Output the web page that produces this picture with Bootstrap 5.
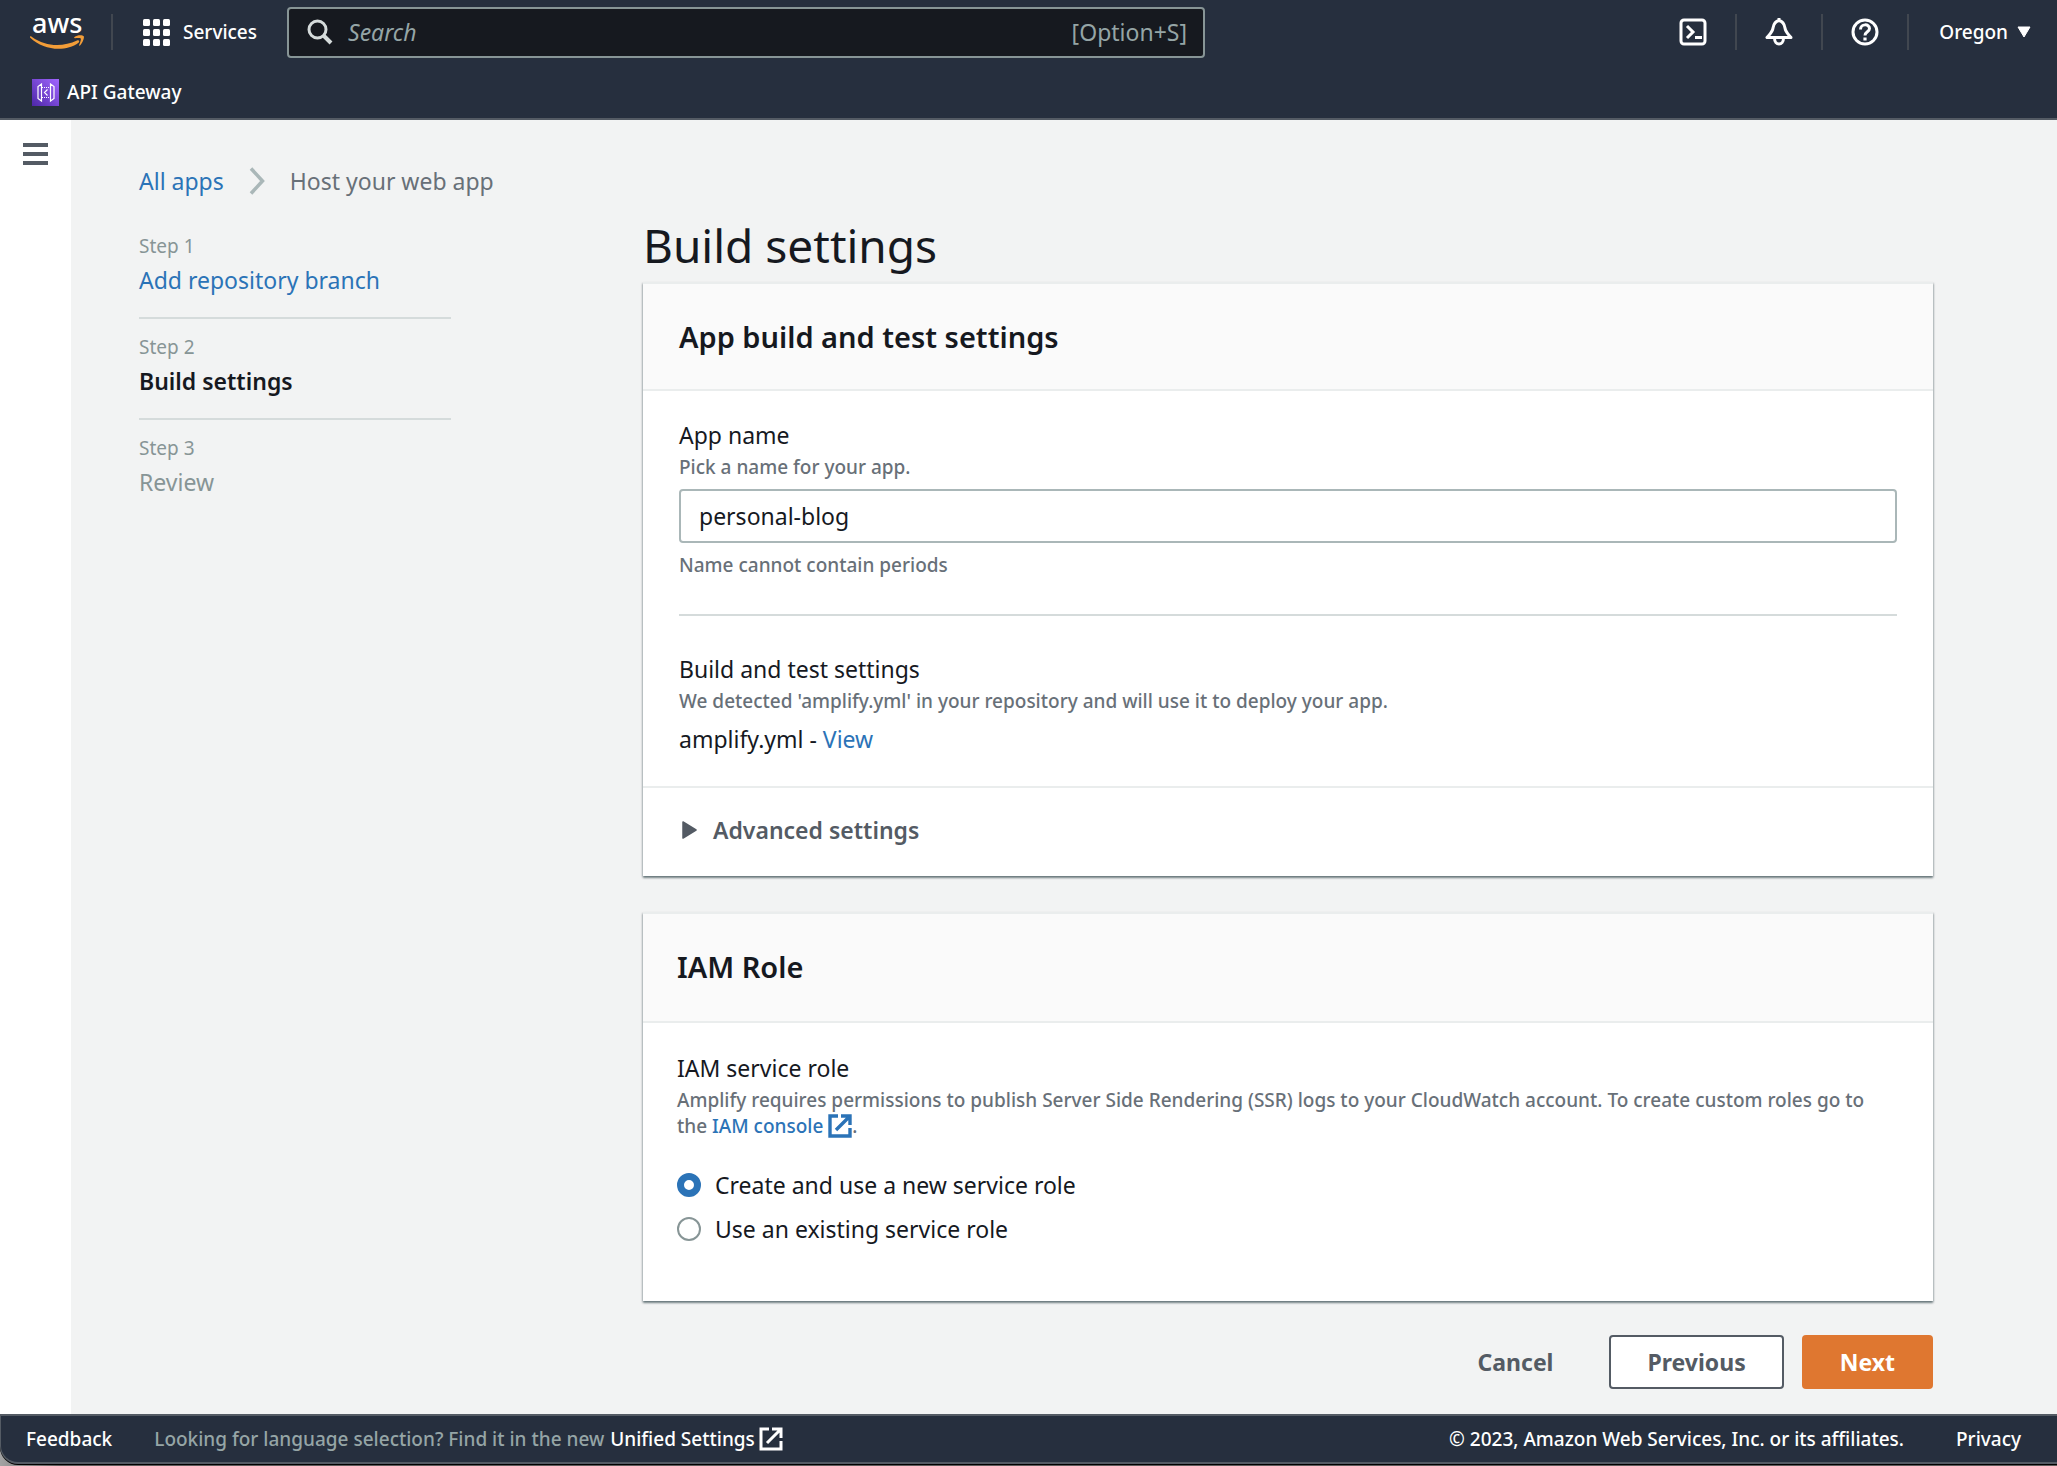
<!DOCTYPE html>
<html lang="en">
<head>
<meta charset="utf-8">
<meta name="viewport" content="width=device-width, initial-scale=1">
<title>Build settings - Host your web app</title>
<link href="https://cdn.jsdelivr.net/npm/bootstrap@5.3.0/dist/css/bootstrap.min.css" rel="stylesheet">
<style>
  :root { --ink: #16191f; --navy: #262f3e; --slate: #545b64; --muted: #687078; --pale: #879596; --blue: #2b73b7; --rule: #d5dbdb; --soft: #eaeded; }
  body { font-family: "Noto Sans", "Open Sans", sans-serif; font-size: 23px; line-height: 30px; color: var(--ink); background: #f2f3f3; }
  a { color: var(--blue); text-decoration: none; }
  a:hover { text-decoration: underline; }
  svg { display: block; flex: none; }
  .hint { color: var(--muted); }
  .note { color: var(--muted); font-size: 19px; line-height: 26px; font-weight: 500; margin-top: 4px; }

  .console-top { background: var(--navy); border-bottom: 2px solid var(--slate); color: #fff; font-size: 19px; line-height: 26px; font-weight: 500; }
  .console-top a, .console-top button { color: #fff; }
  .top-row { height: 64px; padding-left: 30px; padding-right: 26px; }
  .fav-row { height: 54px; padding-left: 32px; padding-top: 2px; }
  .plain-btn { display: flex; align-items: center; background: none; border: 0; padding: 0; font-weight: inherit; }
  .sep { width: 2px; height: 36px; background: #414750; flex: none; }
  .services { margin: 0 30px; gap: 13px; }
  .search-box { flex: 0 1 918px; height: 51px; background: #16191f; border: 2px solid var(--pale); border-radius: 4px; padding: 0 16px 0 18px; gap: 15px; }
  .search-box input { background: none; border: 0; outline: 0; color: #fff; font-size: 23px; font-weight: 400; padding: 0; min-width: 0; }
  .search-box input::placeholder { color: #95a5a6; font-style: italic; opacity: 1; }
  .search-box kbd { background: none; color: #95a5a6; font: 400 23px/30px "Noto Sans", sans-serif; padding: 0; }
  .top-tools { gap: 28px; }
  .region { gap: 9px; padding-left: 2px; }

  .rail { flex: 0 0 71px; background: #fff; padding: 23px 0 0 23px; }
  .page-body { padding: 46px 124px 25px 68px; min-width: 0; }
  .crumbs { gap: 25px; }
  .steps { flex: 0 0 312px; margin-right: 192px; padding-top: 37px; }
  .steps li + li { border-top: 2px solid var(--rule); margin-top: 22px; padding-top: 15px; }
  .steps .label { display: block; color: var(--pale); font-size: 19px; line-height: 26px; margin-bottom: 6px; }
  .steps .later { color: var(--pale); }
  .steps strong, .expander, h2 { font-weight: 600; }

  .wizard { min-width: 0; padding-top: 18px; }
  h1 { font-size: 46px; line-height: 62px; font-weight: 400; margin-bottom: 6px; }
  h2 { font-size: 29px; line-height: 38px; margin-bottom: 0; }
  .panel { background: #fff; border-top: 2px solid var(--soft); box-shadow: 0 2px 2px 0 rgba(0,28,36,.45), 1px 1px 2px 0 rgba(0,28,36,.15), -1px 1px 2px 0 rgba(0,28,36,.15); }
  .panel-head { background: #fafafa; border-bottom: 2px solid var(--soft); padding: 34px 36px 33px; }
  .panel-part { padding: 29px 36px 32px; }
  .panel-more { border-top: 2px solid var(--soft); padding: 27px 36px 31px; }
  .panel-iam { margin-top: 36px; }
  .panel-iam .panel-head { padding: 34px 34px 35px; }
  .panel-iam .panel-part { padding: 30px 34px 57px; }
  .field { height: 54px; border: 2px solid #aab7b8; border-radius: 4px; margin: 9px 0; padding: 0 18px; font-size: 23px; color: var(--ink); }
  .split { border: 0; border-top: 2px solid var(--rule); opacity: 1; margin: 36px 0 38px; }
  .spec { margin-top: 10px; }
  .expander { color: var(--slate); gap: 16px; padding-left: 3px; }
  .ext { display: inline-block; vertical-align: -5px; }
  .choices { margin-top: 31px; gap: 14px; }
  .choice { display: flex; align-items: center; gap: 14px; }
  .choice .form-check-input { width: 24px; height: 24px; margin: 0; border: 2px solid var(--pale); }
  .choice .form-check-input:checked { background-image: none; background-color: #fff; border: 7px solid var(--blue); }
  .actions { margin-top: 34px; gap: 18px; }
  .act { height: 54px; border-radius: 4px; border: 2px solid transparent; padding: 0 36px; font-size: 23px; font-weight: 700; color: var(--slate); }
  .act-outline { background: #fff; border-color: var(--slate); }
  .act-primary { background: #df7730; color: #fff; }

  .foot-wrap { background: linear-gradient(90deg, #a3a3a3, #5e5a5a 60px); padding-bottom: 2px; }
  .console-foot { background: var(--navy); border: 2px solid var(--slate); border-left-width: 1px; border-right-width: 0; border-bottom-left-radius: 18px; height: 50px; padding: 0 36px 0 25px; font-size: 19px; line-height: 26px; color: #fff; font-weight: 500; box-shadow: 0 1px 0 #000; }
  .console-foot a { color: #fff; }
  .ask { color: #95a5a6; margin: 0 6px 0 42px; }
  .legal { gap: 52px; }
</style>
<script src="https://cdn.jsdelivr.net/npm/bootstrap@5.3.0/dist/js/bootstrap.bundle.min.js"></script>
</head>
<body class="d-flex flex-column min-vh-100">

<header class="console-top">
  <div class="top-row d-flex align-items-center">
    <a href="#" aria-label="AWS home">
      <svg width="81" height="60" viewBox="0 -12 81 60">
        <text x="2" y="19" font-family="Noto Sans" font-size="27" font-weight="500" fill="#fff">aws</text>
        <path d="M0 22.5C1 22 1.500 22.500 2 23C16 33 33 33 47 26.500C49 25.500 50 27.500 48.500 28.700C36 38 14 37 0 23.500Z" fill="#f29d38"/>
        <path d="M44.500 23C47.500 20.500 53 21 53.800 22.300C54.500 24 52.500 29 50 31.500C49.300 32 48.800 31.600 49.200 30.800C50.200 28.500 51.300 25.500 50.800 24.600C50 23.700 47 23.900 45 24.200C44 24.200 43.800 23.700 44.500 23Z" fill="#f29d38"/>
      </svg>
    </a>
    <span class="sep"></span>
    <button class="plain-btn services" type="button">
      <svg width="27" height="27" viewBox="0 0 27 27" fill="#fff"><g id="dots"><rect width="7" height="7" rx="1.500"/><rect x="10" width="7" height="7" rx="1.500"/><rect x="20" width="7" height="7" rx="1.500"/></g><use href="#dots" y="10"/><use href="#dots" y="20"/></svg>
      <span>Services</span>
    </button>
    <div class="search-box d-flex align-items-center">
      <svg width="26" height="26" viewBox="0 0 26 26" fill="none" stroke="#d5dbdb" stroke-width="3"><circle cx="10.500" cy="10.500" r="8.500"/><path d="M16.500 16.500L24 24" stroke-width="4"/></svg>
      <input class="flex-grow-1" type="search" placeholder="Search" aria-label="Search">
      <kbd>[Option+S]</kbd>
    </div>
    <div class="top-tools d-flex align-items-center ms-auto">
      <button class="plain-btn" type="button" aria-label="CloudShell"><svg width="28" height="28" viewBox="0 0 28 28" fill="none" stroke="#fff" stroke-width="3"><rect x="2" y="2" width="24" height="24" rx="3"/><path d="M8 8l6 6-6 6M16 19.500h7"/></svg></button>
      <span class="sep"></span>
      <button class="plain-btn" type="button" aria-label="Notifications"><svg width="28" height="28" viewBox="0 0 28 28" fill="none" stroke="#fff" stroke-width="3" stroke-linejoin="round"><path d="M14 2.500C9.500 3.500 8.500 7 8 10C7.500 14 5 16 2 19.500H26C23 16 20.500 14 20 10C19.500 7 18.500 3.500 14 2.500ZM14 0v3M9.500 20c0 8 9 8 9 0"/></svg></button>
      <span class="sep"></span>
      <button class="plain-btn" type="button" aria-label="Help"><svg width="28" height="28" viewBox="0 0 28 28" fill="none" stroke="#fff" stroke-width="3"><circle cx="14" cy="14" r="12"/><path d="M9.500 11.500c0-6 9-6 9-1 0 3.500-4.500 3-4.500 7"/><path d="M14 19.500v3" stroke-width="3.200"/></svg></button>
      <span class="sep"></span>
      <button class="plain-btn region" type="button"><span>Oregon</span><svg width="14" height="12" viewBox="0 0 14 12"><path d="M1 1h12L7 11Z" fill="#fff" stroke="#fff" stroke-linejoin="round"/></svg></button>
    </div>
  </div>
  <div class="fav-row d-flex align-items-center">
    <a href="#" class="d-flex align-items-center gap-2">
      <svg width="27" height="27" viewBox="0 0 27 27"><defs><linearGradient id="violet" x1="0" y1="1" x2="1" y2="0"><stop stop-color="#4d27a8"/><stop offset="1" stop-color="#a166ff"/></linearGradient></defs><rect width="27" height="27" fill="url(#violet)"/><path d="M9.500 5L6 7.500V19.500L9.500 22ZM18.500 5L22 7.500V19.500L18.500 22ZM15.500 10.500L12.500 13.500L15.500 16.500" fill="none" stroke="#fff" stroke-width="1.200"/><path d="M10 8.500h8M10 18.500h8" stroke="#fff" stroke-dasharray="1 1"/></svg>
      <span>API Gateway</span>
    </a>
  </div>
</header>

<div class="d-flex flex-grow-1">
  <aside class="rail">
    <button class="plain-btn" type="button" aria-label="Open navigation"><svg width="25" height="22" viewBox="0 0 25 22" fill="#545b64"><rect width="25" height="4"/><rect y="9" width="25" height="4"/><rect y="18" width="25" height="4"/></svg></button>
  </aside>

  <main class="page-body flex-grow-1">
    <nav aria-label="Breadcrumb">
      <ol class="crumbs list-unstyled d-flex align-items-center mb-0">
        <li><a href="#">All apps</a></li>
        <li aria-hidden="true"><svg width="16" height="28" viewBox="0 0 16 28" fill="none" stroke="#aab7b8" stroke-width="3.500"><path d="M2 1.500L13.500 14L2 26.500"/></svg></li>
        <li class="hint" aria-current="page">Host your web app</li>
      </ol>
    </nav>

    <div class="d-flex align-items-start">
      <ol class="steps list-unstyled mb-0">
        <li><span class="label">Step 1</span><a href="#">Add repository branch</a></li>
        <li><span class="label">Step 2</span><strong>Build settings</strong></li>
        <li><span class="label">Step 3</span><span class="later">Review</span></li>
      </ol>

      <form class="wizard flex-grow-1">
        <h1>Build settings</h1>

        <section class="panel">
          <div class="panel-head"><h2>App build and test settings</h2></div>
          <div class="panel-part">
            <label class="d-block" for="appName">App name</label>
            <div class="note" id="nameHint">Pick a name for your app.</div>
            <input class="field w-100 d-block" id="appName" type="text" value="personal-blog" aria-describedby="nameHint nameRule">
            <div class="note" id="nameRule">Name cannot contain periods</div>
            <hr class="split">
            <div>Build and test settings</div>
            <div class="note">We detected 'amplify.yml' in your repository and will use it to deploy your app.</div>
            <div class="spec">amplify.yml - <a href="#">View</a></div>
          </div>
          <div class="panel-more">
            <button class="plain-btn expander" type="button" aria-expanded="false">
              <svg width="15" height="18" viewBox="0 0 15 18"><path d="M1 1L14 9L1 17Z" fill="#545b64" stroke="#545b64" stroke-width="1.500" stroke-linejoin="round"/></svg>
              <span>Advanced settings</span>
            </button>
          </div>
        </section>

        <section class="panel panel-iam">
          <div class="panel-head"><h2>IAM Role</h2></div>
          <div class="panel-part">
            <div>IAM service role</div>
            <div class="note">Amplify requires permissions to publish Server Side Rendering (SSR) logs to your CloudWatch account. To create custom roles go to the&nbsp;<a href="#">IAM console <svg class="ext" width="24" height="24" viewBox="0 0 24 24" fill="none" stroke="#2b73b7" stroke-width="3.400"><path d="M10 2H2V22H22V14M13 2H22V11M21.500 2.500L8 16"/></svg></a>.</div>
            <div class="choices d-flex flex-column">
              <div class="choice"><input class="form-check-input" type="radio" name="role" id="roleNew" checked><label for="roleNew">Create and use a new service role</label></div>
              <div class="choice"><input class="form-check-input" type="radio" name="role" id="roleOld"><label for="roleOld">Use an existing service role</label></div>
            </div>
          </div>
        </section>

        <div class="actions d-flex justify-content-end">
          <button class="act bg-transparent" type="button">Cancel</button>
          <button class="act act-outline" type="button">Previous</button>
          <button class="act act-primary" type="submit">Next</button>
        </div>
      </form>
    </div>
  </main>
</div>

<div class="foot-wrap">
  <footer class="console-foot d-flex align-items-center">
    <a href="#">Feedback</a>
    <span class="ask">Looking for language selection? Find it in the new</span>
    <a class="d-flex align-items-center gap-1" href="#"><span>Unified Settings</span><svg width="24" height="24" viewBox="0 0 24 24" fill="none" stroke="#fff" stroke-width="3"><path d="M10 2H2V22H22V14M13 2H22V11M21.500 2.500L8 16"/></svg></a>
    <div class="legal d-flex ms-auto">
      <span>© 2023, Amazon Web Services, Inc. or its affiliates.</span>
      <a href="#">Privacy</a>
    </div>
  </footer>
</div>
</body>
</html>
